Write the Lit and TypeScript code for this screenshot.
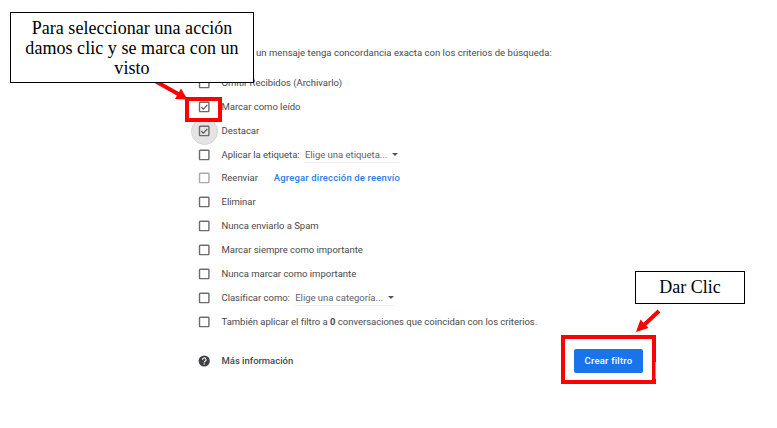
import { LitElement, html, css, svg, nothing } from "lit";
import { customElement, property } from "lit/decorators.js";

interface FilterAction {
  label: string;
  count?: string;
  tail?: string;
  checked?: boolean;
  focused?: boolean;
  disabled?: boolean;
  select?: string;
  link?: string;
}

const ACTIONS: FilterAction[] = [
  { label: "Omitir Recibidos (Archivarlo)" },
  { label: "Marcar como leído", checked: true },
  { label: "Destacar", checked: true, focused: true },
  { label: "Aplicar la etiqueta:", select: "Elige una etiqueta..." },
  { label: "Reenviar", disabled: true, link: "Agregar dirección de reenvío" },
  { label: "Eliminar" },
  { label: "Nunca enviarlo a Spam" },
  { label: "Marcar siempre como importante" },
  { label: "Nunca marcar como importante" },
  { label: "Clasificar como:", select: "Elige una categoría..." },
  { label: "También aplicar el filtro a ", count: "0", tail: " conversaciones que coincidan con los criterios." },
];

@customElement("filter-row")
class FilterRow extends LitElement {
  @property({ attribute: false }) action!: FilterAction;

  static styles = css`
    :host { display: flex; align-items: center; height: 23.9px; white-space: nowrap; }
    .box { position: relative; width: 12px; height: 12px; margin-right: 11.5px; flex: none; }
    .box svg { display: block; position: relative; }
    .halo { position: absolute; box-sizing: border-box; left: -7px; top: -7px; width: 27px; height: 27px; border-radius: 50%; background: #e4e4e4; border: 1px solid #d4d4d4; }
    .select { display: flex; align-items: center; gap: 5px; margin-left: 5.3px; height: 14px; box-shadow: 0 1px #f0f0f0; color: #606367; padding-right: 1px; }
    .caret { width: 0; height: 0; border: 3px solid transparent; border-top: 3px solid #555; border-bottom: 0; }
    .link { color: #2b7de9; font-weight: 500; margin-left: 16px; letter-spacing: 0.15px; }
    b { font-weight: 700; }
  `;

  render() {
    const a = this.action;
    return html`
      <span class="box">
        ${a.focused ? html`<span class="halo"></span>` : nothing}
        <svg width="12" height="12" viewBox="0 0 12 12" fill="none">
          <rect x="1.5" y="1.2" width="9.4" height="9.4" rx="0.6" stroke=${a.disabled ? "#aaa" : "#6c6c6c"} stroke-width="1.4" />
          ${a.checked ? svg`<path d="M3.300 6.100 5.300 8.100 9.400 3.800" stroke="#555" stroke-width="1.2" />` : nothing}
        </svg>
      </span>
      <span>${a.label}${a.count ? html`<b>${a.count}</b>` : nothing}${a.tail ?? nothing}</span>
      ${a.select ? html`<span class="select">${a.select}<i class="caret"></i></span>` : nothing}
      ${a.link ? html`<span class="link">${a.link}</span>` : nothing}
    `;
  }
}

@customElement("app-root")
class AppRoot extends LitElement {
  static styles = css`
    :host { display: block; position: relative; width: 777px; height: 428px; overflow: hidden; background: #fff; color: #48494c; font: 9.5px/14px Roboto, sans-serif; letter-spacing: -0.015px; }
    .panel { padding: 46px 0 0 198px; }
    .intro { margin-left: 23px; white-space: nowrap; height: 24.9px; letter-spacing: 0.02px; }
    .footer { display: flex; align-items: center; height: 26px; margin-top: 14.1px; width: 445px; }
    .help { margin-right: 11.5px; flex: none; }
    .more { font-weight: 500; }
    .create { margin-left: auto; width: 69px; height: 24px; border: 0; border-radius: 2px; padding: 0; background: #1a73e8; color: #fff; font: 500 9.5px/23px Roboto, sans-serif; letter-spacing: 0.2px; }
    .note { position: absolute; box-sizing: border-box; background: #fff; border: 1px solid #000; color: #000; text-align: center; font: 18px/20px "Liberation Serif", serif; white-space: nowrap; }
    .pick { left: 10px; top: 12px; width: 244px; height: 71px; padding-top: 5px; letter-spacing: 0.05px; }
    .click { left: 635px; top: 271px; width: 110px; height: 33px; padding-top: 5px; }
    .mark { position: absolute; box-sizing: border-box; border: 4px solid #f00; }
    .check { left: 185px; top: 97px; width: 37px; height: 25px; }
    .submit { left: 561px; top: 335px; width: 95px; height: 49px; }
    .arrows { position: absolute; left: 0; top: 0; }
  `;

  render() {
    return html`
      <div class="panel">
        <div class="intro">Cuando un mensaje tenga concordancia exacta con los criterios de búsqueda:</div>
        ${ACTIONS.map((a) => html`<filter-row .action=${a}></filter-row>`)}
        <div class="footer">
          <svg class="help" width="12" height="12" viewBox="0 0 12 12" fill="none">
            <circle cx="6.2" cy="6" r="5.6" fill="#404144" />
            <path d="M4.400 4.800a1.800 1.800 0 1 1 2.700 1.500C6.400 6.700 6.200 7 6.200 7.500" stroke="#fff" stroke-width="1.1" />
            <circle cx="6.2" cy="9" r="0.7" fill="#fff" />
          </svg>
          <span class="more">Más información</span>
          <button class="create">Crear filtro</button>
        </div>
      </div>
      <div class="mark check"></div>
      <div class="mark submit"></div>
      <svg class="arrows" width="777" height="428" viewBox="0 0 777 428" fill="#f00" stroke="#f00">
        <path d="M156 81.500 180 95M659 311 644 325" stroke-width="4" />
        <path d="M187.500 99.500 175 99 181 88.500ZM636 332 640.500 319.500 648.500 328Z" stroke="none" />
        <path d="M655.500 362V379" stroke="#27d8d0" stroke-width="1" />
      </svg>
      <div class="note pick">Para seleccionar una acción<br />damos clic y se marca con un<br />visto</div>
      <div class="note click">Dar Clic</div>
    `;
  }
}
